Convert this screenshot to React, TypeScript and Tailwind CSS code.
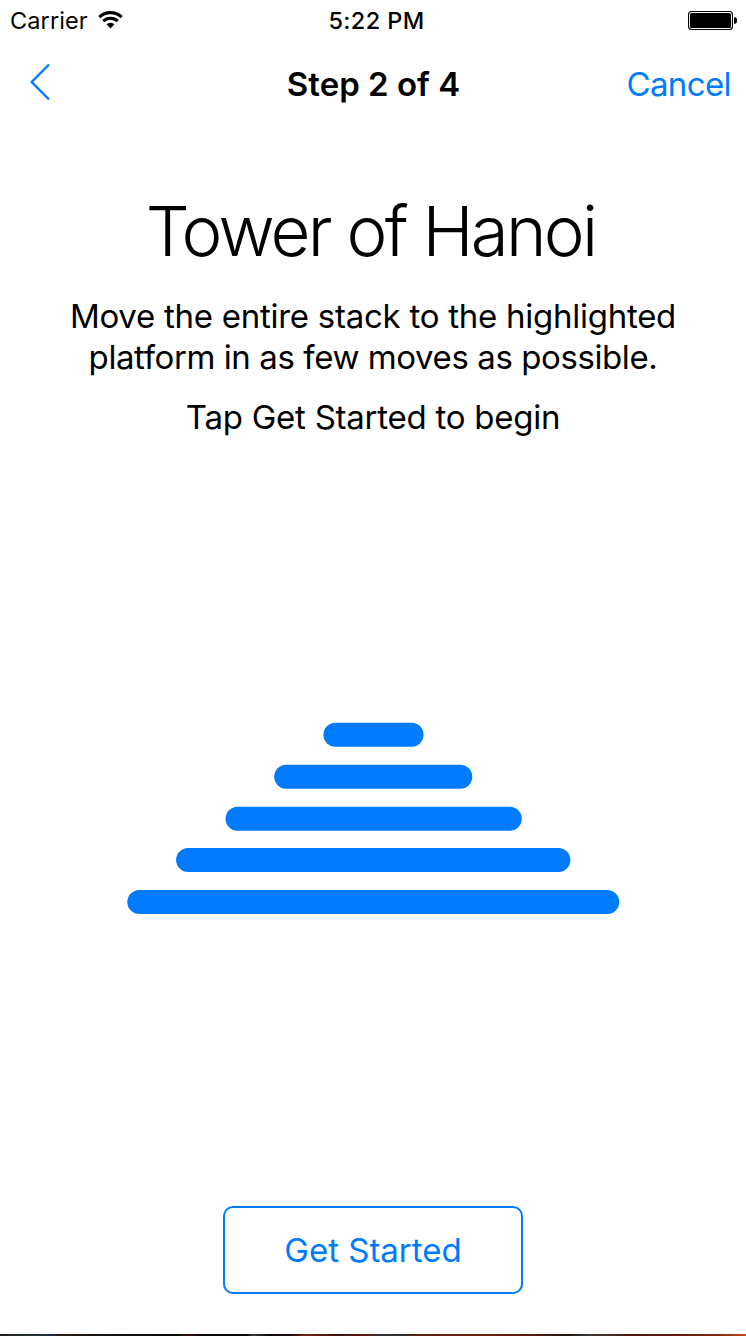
const discs = [
  { x: 196.4, y: 0.65, width: 100.2 },
  { x: 147.2, y: 42.65, width: 198.1 },
  { x: 98.5, y: 84.65, width: 296.3 },
  { x: 49.1, y: 126, width: 394.3 },
  { x: 0.3, y: 168, width: 492 },
];

function StatusBar() {
  return (
    <div className="grid h-[42px] grid-cols-[1fr_auto_1fr] items-center pr-[9px] pl-[10px] text-[23.5px] leading-[42px]">
      <div className="flex items-center gap-[10px]">
        <span className="tracking-[0.1px]">Carrier</span>
        <svg width="26" height="20" viewBox="0 0 26 20" className="mb-0.5 shrink-0">
          <g fill="none" stroke="#000" strokeWidth="3.1">
            <path d="M1.3 7.2A16 16 0 0 1 23.7 7.2" />
            <path d="M5.2 11.2A10.4 10.4 0 0 1 19.8 11.2" />
          </g>
          <path d="M8.5 14.3A5.8 5.8 0 0 1 16.5 14.3L12.5 18.6Z" />
        </svg>
      </div>
      <span className="pl-[6px] text-center font-medium whitespace-nowrap tracking-[0.4px]">5:22 PM</span>
      <svg width="50" height="20" viewBox="0 0 50 20" className="mb-0.5 justify-self-end">
        <rect x="1.55" y="1.55" width="43.9" height="17.9" rx="3" fill="none" stroke="#000" strokeWidth="1.1" />
        <rect x="3" y="3" width="41" height="15" rx="1.5" />
        <path d="M47 7.3h.8q2.2 0 2.2 3.2t-2.2 3.3H47z" />
      </svg>
    </div>
  );
}

function NavBar() {
  return (
    <div className="grid h-[84px] grid-cols-[1fr_auto_1fr] items-center pr-[15px] pl-[15px] text-[33px] leading-[84px]">
      <svg width="22" height="38" viewBox="0 0 22 38" fill="none" stroke="#007aff" strokeWidth="2.4" className="mb-1 ml-[14px]">
        <path d="M20 1.5L2.7 19L20 36.5" />
      </svg>
      <h1 className="pl-px text-center font-semibold whitespace-nowrap">Step 2 of 4</h1>
      <button className="justify-self-end text-[#007aff] tracking-[-0.6px]">Cancel</button>
    </div>
  );
}

function TowerIllustration() {
  return (
    <svg width="493" height="192" viewBox="0 0 493 192" fill="#007aff" className="mt-[284px] ml-px shrink-0">
      {discs.map((disc) => (
        <rect key={disc.y} x={disc.x} y={disc.y} width={disc.width} height="24" rx="12" />
      ))}
    </svg>
  );
}

export default function App() {
  return (
    <div className="flex h-[1336px] w-[746px] flex-col overflow-hidden bg-white font-['Inter',sans-serif] text-black">
      <StatusBar />
      <NavBar />
      <main className="flex flex-1 flex-col items-center pt-[64px] text-center text-[33px] leading-[41px]">
        <h2 className="pr-[5px] text-[69px] leading-[82px] font-light whitespace-nowrap tracking-[-2.75px]">Tower of Hanoi</h2>
        <p className="mt-6 whitespace-nowrap">
          <span className="block tracking-[-0.26px]">Move the entire stack to the highlighted</span>
          <span className="block tracking-[-0.41px]">platform in as few moves as possible.</span>
        </p>
        <p className="mt-[19px] whitespace-nowrap tracking-[-0.25px]">Tap Get Started to begin</p>
        <TowerIllustration />
        <button className="mt-auto mb-10 h-[88px] w-[300px] rounded-[10px] border-2 border-[#007aff] text-[#007aff]">
          Get Started
        </button>
      </main>
      <div className="h-0.5 bg-[linear-gradient(to_right,#1b1d24_0%,#26352c_4%,#1f2a44_7%,#2a1d16_8%,#14120f_15%,#0c0a09_24%,#3a120c_25%,#0c0a09_27%,#0b0a0a_33%,#3a3a3c_34%,#0c0a09_36%,#1a0d0a_39%,#7a2416_41%,#3a140d_45%,#5c1a10_49%,#30343a_51%,#2a302e_54%,#5a2212_56%,#6a2412_64%,#5a1e10_70%,#3a1a10_74%,#1e1812_76%,#3c3a36_79%,#4a1c12_84%,#5e1a0e_90%,#7e2a14_96%,#c04a24_100%)]" />
    </div>
  );
}
